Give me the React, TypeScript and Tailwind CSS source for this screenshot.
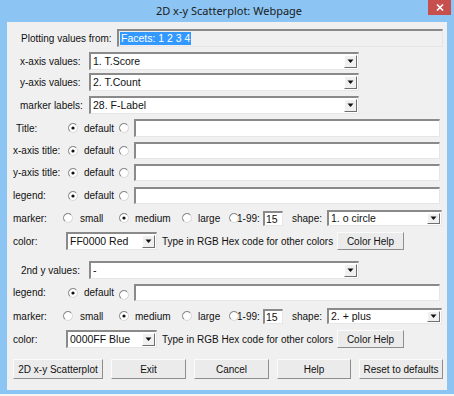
import React from 'react';

const sunken =
  'border-t-2 border-l-2 border-r border-b border-t-[#8a8a8a] border-l-[#8a8a8a] border-r-[#e6e6e6] border-b-[#e6e6e6]';

const Radio: React.FC<{ checked?: boolean }> = ({ checked }) => (
  <svg width="10" height="10" viewBox="0 0 10 10" className="shrink-0">
    <circle cx="5" cy="5" r="4.2" fill="#ffffff" />
    <path d="M1.9 8.1 A4.3 4.3 0 0 1 8.1 1.9" fill="none" stroke="#8a8a8a" strokeWidth="1.1" />
    <path d="M8.1 1.9 A4.3 4.3 0 0 1 1.9 8.1" fill="none" stroke="#d8d8d8" strokeWidth="1.1" />
    {checked && <circle cx="5" cy="5" r="1.6" fill="#111111" />}
  </svg>
);

const Select: React.FC<{ value: string; w: string }> = ({ value, w }) => (
  <div className={`${w} shrink-0 h-full flex items-stretch bg-white ${sunken}`}>
    <span className="flex-1 pl-[2px] flex items-center overflow-hidden text-[10.5px]">{value}</span>
    <span className="w-[13px] my-[1px] mr-[1px] flex items-center justify-center bg-[#f0f0f0] border border-t-white border-l-white border-r-[#6f6f6f] border-b-[#6f6f6f]">
      <svg width="7" height="5" viewBox="0 0 7 5">
        <path d="M0.5 0.5 H6.5 L3.5 4 Z" fill="#111111" />
      </svg>
    </span>
  </div>
);

const Button: React.FC<{ label: string; w: string }> = ({ label, w }) => (
  <div className={`${w} shrink-0 h-full flex items-center justify-center bg-[#ebebeb] border border-t-[#fbfbfb] border-l-[#fbfbfb] border-r-[#8e8e8e] border-b-[#8e8e8e]`}>
    {label}
  </div>
);

const SelectRow: React.FC<{ label: string; value: string; mt: string }> = ({ label, value, mt }) => (
  <div className={`${mt} h-[18px] flex items-center`}>
    <span className="w-[82px] shrink-0 pl-[13px]">{label}</span>
    <Select value={value} w="w-[270px]" />
  </div>
);

const TextRow: React.FC<{ label: string; mt: string; h?: string; pl?: string; low?: boolean }> = ({
  label,
  mt,
  h = 'h-[17px]',
  pl = 'pl-[6px]',
  low,
}) => (
  <div className={`${mt} ${h} flex items-center`}>
    <span className={`w-[61px] shrink-0 ${pl}`}>{label}</span>
    <span className="w-[51px] shrink-0 flex items-center gap-[6px]">
      <Radio checked />
      <span>default</span>
    </span>
    <span className={`w-[15px] shrink-0 flex items-center ${low ? 'pt-[5px]' : ''}`}>
      <Radio />
    </span>
    <div className={`w-[306px] shrink-0 h-full bg-white ${sunken}`} />
  </div>
);

const MarkerRow: React.FC<{ mt: string; shape: string }> = ({ mt, shape }) => (
  <div className={`${mt} h-[16px] flex items-center`}>
    <span className="w-[56px] shrink-0 pl-[6px]">marker:</span>
    <span className="w-[56px] shrink-0 flex items-center gap-[7px]">
      <Radio />
      <span>small</span>
    </span>
    <span className="w-[63px] shrink-0 flex items-center gap-[6px]">
      <Radio checked />
      <span>medium</span>
    </span>
    <span className="w-[47px] shrink-0 flex items-center gap-[6px]">
      <Radio />
      <span>large</span>
    </span>
    <span className="w-[34px] shrink-0 flex items-center">
      <Radio />
      <span className="-ml-[2px]">1-99:</span>
    </span>
    <div className={`w-[20px] shrink-0 h-[15px] bg-white ${sunken} pl-[1px] leading-[12px] text-[10.5px]`}>15</div>
    <span className="w-[44px] shrink-0 pl-[9px]">shape:</span>
    <div className="h-[16px] shrink-0">
      <Select value={shape} w="w-[115px]" />
    </div>
  </div>
);

const ColorRow: React.FC<{ mt: string; value: string }> = ({ mt, value }) => (
  <div className={`${mt} h-[18px] flex items-center`}>
    <span className="w-[59px] shrink-0 pl-[6px]">color:</span>
    <Select value={value} w="w-[91px]" />
    <span className="w-[180px] shrink-0 pl-[5px]">Type in RGB Hex code for other colors</span>
    <Button label="Color Help" w="w-[67px]" />
  </div>
);

const App: React.FC = () => {
  return (
    <div className="w-[454px] h-[396px] bg-[#8cc5f3] flex flex-col whitespace-nowrap font-['Liberation_Sans',Arial,sans-serif] text-[10px] text-[#111111] relative overflow-hidden">
      {/* title bar */}
      <div className="h-[22px] shrink-0 flex items-center justify-center pl-[4px] font-['Noto_Sans',sans-serif] text-[11px] text-[#1a1a1a]">
        2D x-y Scatterplot: Webpage
      </div>
      <div className="absolute top-0 right-[3px] w-[23px] h-[15px] bg-[#c7504f] flex items-center justify-center">
        <svg width="8" height="7" viewBox="0 0 8 7">
          <path d="M1 0.5 L7 6.5 M7 0.5 L1 6.5" stroke="#ffffff" strokeWidth="1.6" />
        </svg>
      </div>

      {/* client area */}
      <div className="mx-[7px] h-[368px] shrink-0 bg-[#f0f0f0] flex flex-col">
        <div className="mt-[7px] h-[18px] flex items-center">
          <span className="w-[110px] shrink-0 pl-[14px]">Plotting values from:</span>
          <div className={`w-[326px] shrink-0 h-full bg-[#f0f0f0] ${sunken} flex items-center pl-[1px]`}>
            <span className="bg-[#3399ff] text-white px-[1px] leading-[13px] text-[10.5px]">Facets: 1 2 3 4</span>
          </div>
        </div>

        <SelectRow label="x-axis values:" value="1. T.Score" mt="mt-[5px]" />
        <SelectRow label="y-axis values:" value="2. T.Count" mt="mt-[3px]" />
        <SelectRow label="marker labels:" value="28. F-Label" mt="mt-[5px]" />

        <TextRow label="Title:" mt="mt-[5px]" h="h-[18px]" pl="pl-[9px]" />
        <TextRow label="x-axis title:" mt="mt-[5px]" />
        <TextRow label="y-axis title:" mt="mt-[5px]" />
        <TextRow label="legend:" mt="mt-[6px]" />

        <MarkerRow mt="mt-[6px]" shape="1. o circle" />
        <ColorRow mt="mt-[6px]" value="FF0000 Red" />

        <div className="mt-[11px] h-[18px] flex items-center">
          <span className="w-[82px] shrink-0 pl-[14px]">2nd y values:</span>
          <Select value="-" w="w-[270px]" />
        </div>

        <TextRow label="legend:" mt="mt-[5px]" low />
        <MarkerRow mt="mt-[7px]" shape="2. + plus" />
        <ColorRow mt="mt-[6px]" value="0000FF Blue" />

        <div className="mt-[11px] h-[20px] flex items-center pl-[6px] gap-[8px]">
          <Button label="2D x-y Scatterplot" w="w-[90px]" />
          <Button label="Exit" w="w-[75px]" />
          <Button label="Cancel" w="w-[75px]" />
          <Button label="Help" w="w-[74px]" />
          <Button label="Reset to defaults" w="w-[84px]" />
        </div>
      </div>
      <div className="h-[4px] shrink-0" />
      <div className="flex-1 bg-[#f4f4f4]" />
    </div>
  );
};

export default App;
